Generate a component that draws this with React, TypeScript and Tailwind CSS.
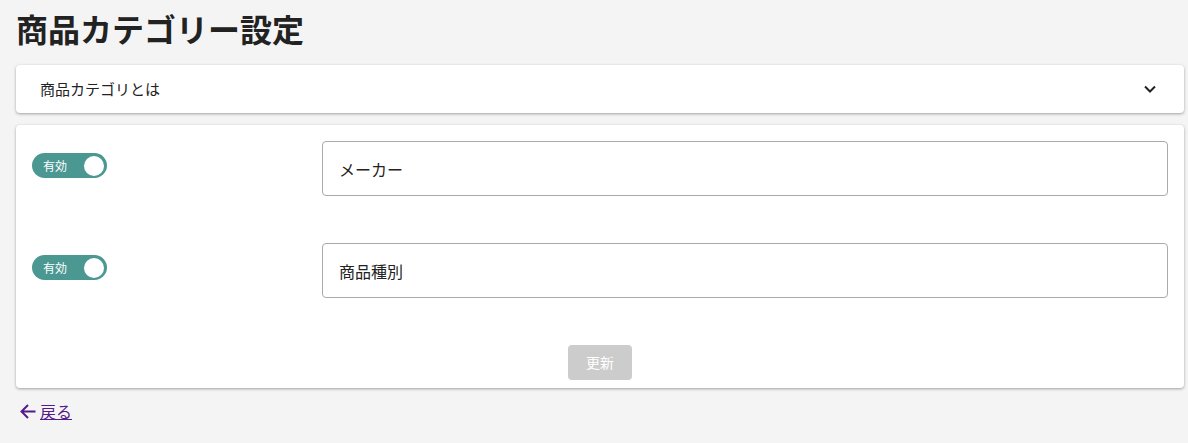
import { useState } from "react";

type Category = { id: number; name: string; enabled: boolean };

const initial: Category[] = [
  { id: 1, name: "メーカー", enabled: true },
  { id: 2, name: "商品種別", enabled: true },
];

const font = "font-['Noto_Sans_CJK_JP','Noto_Sans',sans-serif]";

function Toggle({ on, onChange }: { on: boolean; onChange: () => void }) {
  return (
    <button
      type="button"
      onClick={onChange}
      className={`relative flex h-[25px] w-[75px] items-center rounded-full ${
        on ? "bg-[#4b9792]" : "bg-[#b5b5b5]"
      }`}
    >
      <span className="ml-[11px] text-[12px] leading-none text-white">
        {on ? "有効" : "無効"}
      </span>
      <span
        className={`absolute top-[2.5px] h-5 w-5 rounded-full bg-white ${
          on ? "right-[3px]" : "left-[3px]"
        }`}
      />
    </button>
  );
}

export default function App() {
  const [items, setItems] = useState(initial);
  const [open, setOpen] = useState(false);

  function toggle(id: number) {
    setItems((prev) =>
      prev.map((c) => (c.id === id ? { ...c, enabled: !c.enabled } : c))
    );
  }

  return (
    <div className={`min-h-[443px] bg-[#f4f4f4] pl-4 pr-1 pt-[6px] ${font} text-[#222]`}>
      <h1 className="text-[32px] font-bold leading-[44px] text-[#222]">
        商品カテゴリー設定
      </h1>

      <div className="mt-[15px] rounded bg-white shadow-[0_1px_3px_rgba(0,0,0,0.35)]">
        <button
          type="button"
          onClick={() => setOpen(!open)}
          className="flex h-12 w-full items-center justify-between pl-6 pr-[28px] text-left"
        >
          <span className="text-[15px] text-[#222]">商品カテゴリとは</span>
          <svg width="12" height="8" viewBox="0 0 12 8" className={open ? "rotate-180" : ""}>
            <polyline
              points="1,1.5 6,6.5 11,1.5"
              fill="none"
              stroke="#222"
              strokeWidth="2"
            />
          </svg>
        </button>
      </div>

      <div className="mt-3 rounded bg-white px-4 pb-2 pt-4 shadow-[0_1px_3px_rgba(0,0,0,0.35)]">
        <div className="flex flex-col gap-[47px]">
          {items.map((c) => (
            <div key={c.id} className="flex items-center">
              <div className="mt-3 w-[290px] shrink-0 self-start">
                <Toggle on={c.enabled} onChange={() => toggle(c.id)} />
              </div>
              <input
                defaultValue={c.name}
                className="h-[55px] flex-1 rounded border border-[#aaa] bg-white px-4 text-[16px] text-[#222] outline-none"
              />
            </div>
          ))}
        </div>
        <div className="mt-[47px] flex justify-center">
          <button
            type="button"
            disabled
            className="h-[35px] w-16 rounded bg-[#cccccc] text-[14px] text-white"
          >
            更新
          </button>
        </div>
      </div>

      <a
        href="#"
        className="mt-[13px] inline-flex items-center gap-[4px] pl-1 text-[16px] leading-5 text-[#551a8b]"
      >
        <svg width="16" height="15" viewBox="0 0 16 15">
          <path
            d="M15.5 7.5H1.5M8 1L1.5 7.5 8 14"
            fill="none"
            stroke="#551a8b"
            strokeWidth="2"
          />
        </svg>
        <span className="underline">戻る</span>
      </a>
    </div>
  );
}
